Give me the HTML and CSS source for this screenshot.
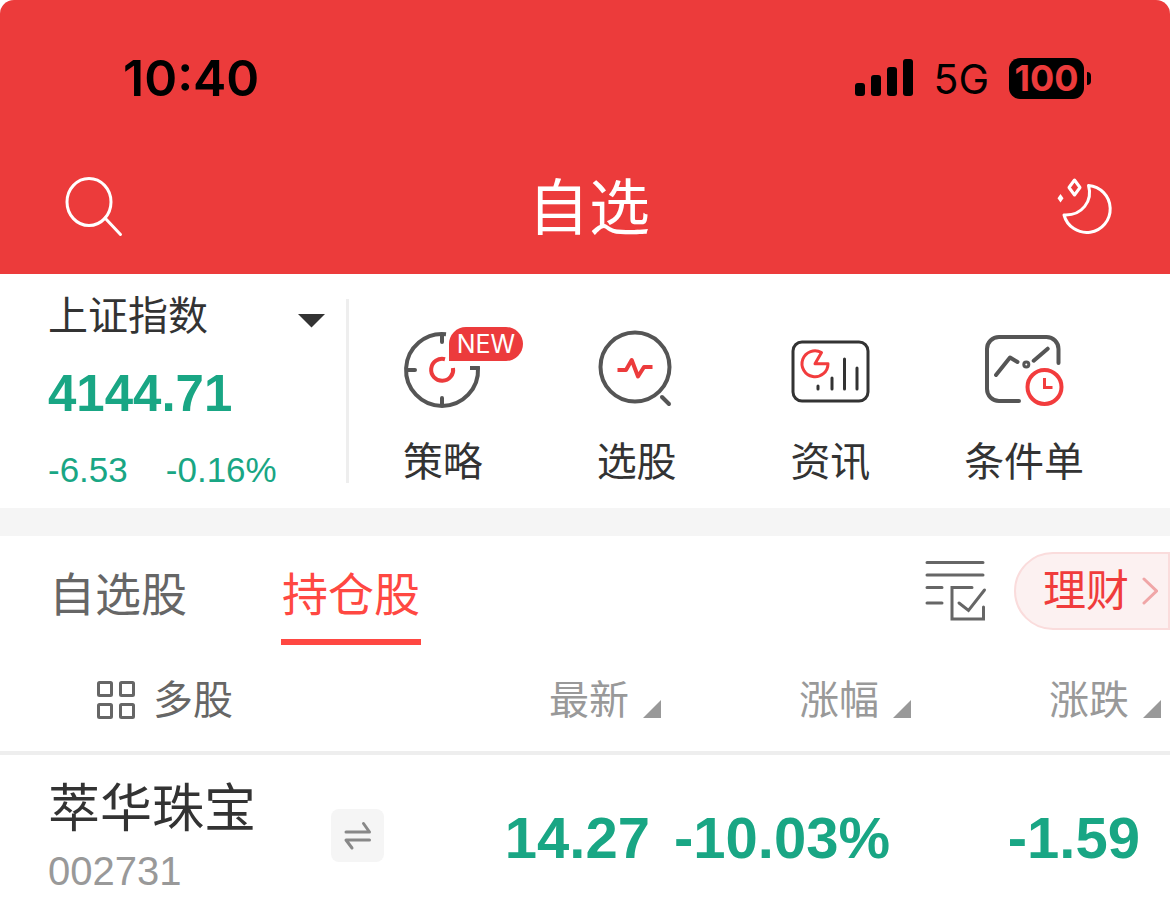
FILE: index.html
```html
<!DOCTYPE html>
<html lang="zh-CN">
<head>
<meta charset="utf-8">
<meta name="viewport" content="width=device-width, initial-scale=1">
<title>自选</title>
<link rel="stylesheet" href="styles.css">
</head>
<body>
<header class="header">
  <div class="status">
    <time class="clock">10:40</time>
    <div class="status-right">
      <svg class="signal" width="58" height="38" viewBox="0 0 58 38" aria-hidden="true">
        <rect x="0" y="24" width="10" height="13" rx="3"/><rect x="16" y="16" width="10" height="21" rx="3"/><rect x="32" y="8" width="10" height="29" rx="3"/><rect x="48" y="0" width="10" height="37" rx="3"/>
      </svg>
      <span class="network">5G</span>
      <span class="battery"><span class="battery-level">100</span><span class="battery-tip"></span></span>
    </div>
  </div>
  <div class="titlebar">
    <button class="icon-button" aria-label="搜索">
      <svg width="60" height="62" viewBox="0 0 60 62" fill="none" stroke="#fff" stroke-width="3" stroke-linecap="round"><ellipse cx="25" cy="26" rx="22" ry="23.5"/><path d="M41 42 56.5 58.5"/></svg>
    </button>
    <h1 class="title">自选</h1>
    <button class="icon-button" aria-label="夜间模式">
      <svg width="60" height="62" viewBox="0 0 60 62" fill="none" stroke="#fff" stroke-width="3" stroke-linejoin="round"><path d="M34.5 9.5A23.5 23.5 0 1 1 10 39C28 40 39 25 34.5 9.5Z"/><path d="M20.5 4 26 11.500 20.500 19 15 11.500Z"/><path d="M6.500 18 9.500 22.300 6.500 26.500 3.500 22.300Z" fill="#fff" stroke="none"/></svg>
    </button>
  </div>
</header>

<main>
  <section class="overview">
    <div class="index">
      <button class="index-name">上证指数
        <svg class="caret" width="28" height="14" viewBox="0 0 28 14" aria-hidden="true"><path d="M0 0H27L13.500 13.500Z" fill="#333"/></svg>
      </button>
      <strong class="index-value">4144.71</strong>
      <div class="index-change"><span>-6.53</span><span>-0.16%</span></div>
    </div>
    <nav class="tools">
      <a class="tool" href="#strategy">
        <span class="tool-icon">
          <svg width="80" height="80" viewBox="0 0 80 80" fill="none" stroke="#555" stroke-width="4"><path d="M43 4.200A36 36 0 1 0 75 38H67"/><path d="M39 5V12M5 40H12M39 75V68" stroke-linecap="round"/><path d="M42 29.200A11 11 0 1 0 50 38" stroke="#ec3b3c"/></svg>
          <span class="badge">NEW</span>
        </span>
        策略
      </a>
      <a class="tool" href="#screener">
        <span class="tool-icon">
          <svg width="80" height="80" viewBox="0 0 80 80" fill="none" stroke="#555" stroke-width="4"><circle cx="38" cy="37" r="34.500"/><path d="M65 67 72 74" stroke-linecap="round"/><path d="M20.500 40H29L34.700 30 41 46.500 47 37H55.500" stroke="#ec3b3c" stroke-linejoin="round"/></svg>
        </span>
        选股
      </a>
      <a class="tool" href="#news">
        <span class="tool-icon">
          <svg width="80" height="80" viewBox="0 0 80 80" fill="none" stroke="#333" stroke-width="3"><rect x="3" y="12" width="75" height="59" rx="9"/><path d="M28 56V59M42 48V59M54.500 29V59M67 38V59" stroke-linecap="round"/><path d="M25 33.700H38A13 13 0 1 1 31.500 22.500Z" stroke="#f23c3d" stroke-linejoin="round"/></svg>
        </span>
        资讯
      </a>
      <a class="tool" href="#orders">
        <span class="tool-icon">
          <svg width="80" height="80" viewBox="0 0 80 80" fill="none" stroke="#555" stroke-width="4" stroke-linecap="round" stroke-linejoin="round"><path d="M74.500 33V19A12 12 0 0 0 62.500 7H15A12 12 0 0 0 3 19V59A12 12 0 0 0 15 71H35"/><path d="M12 45 26 27.500 33.500 32M49.700 30.700 63.700 18.700"/><circle cx="42.300" cy="34.500" r="2.500" stroke-width="3"/><g stroke="#f23c3d" stroke-linecap="butt" stroke-linejoin="miter"><circle cx="60.500" cy="57" r="17"/><path d="M60.500 48V57.500H68.500" stroke-width="3"/></g></svg>
        </span>
        条件单
      </a>
    </nav>
  </section>

  <section class="watchlist">
    <div class="toolbar">
      <div class="tabs" role="tablist">
        <button class="tab" role="tab" aria-selected="false">自选股</button>
        <button class="tab tab-active" role="tab" aria-selected="true">持仓股</button>
      </div>
      <div class="toolbar-right">
        <button class="icon-button" aria-label="编辑列表">
          <svg width="64" height="64" viewBox="0 0 64 64" fill="none" stroke="#666" stroke-width="3" stroke-linecap="round"><path d="M3 3.500H59M3 16H59M3 28.500H18M3 44H18M48 28.500H28V60H59.500V48"/><path d="M35 44 44.500 51.500 60.500 31"/></svg>
        </button>
        <a class="wealth" href="#wealth">理财
          <svg width="16" height="28" viewBox="0 0 16 28" fill="none" stroke="#f0a6a7" stroke-width="3" stroke-linecap="round" aria-hidden="true"><path d="M2 2 14.500 14 2 26"/></svg>
        </a>
      </div>
    </div>

    <table class="stocks">
      <thead>
        <tr>
          <th class="col-name" scope="col"><button class="multi"><svg width="38" height="38" viewBox="0 0 38 38" fill="none" stroke="#666" stroke-width="3" aria-hidden="true"><rect x="1.500" y="1.500" width="13" height="13" rx="1"/><rect x="23.500" y="1.500" width="13" height="13" rx="1"/><rect x="1.500" y="23.500" width="13" height="13" rx="1"/><rect x="23.500" y="23.500" width="13" height="13" rx="1"/></svg>多股</button></th>
          <th class="col-value" scope="col"><button class="sort">最新</button></th>
          <th class="col-value" scope="col"><button class="sort">涨幅</button></th>
          <th class="col-value" scope="col"><button class="sort">涨跌</button></th>
        </tr>
      </thead>
      <tbody>
        <tr>
          <td>
            <div class="stock">
              <div class="stock-text"><span class="stock-name">萃华珠宝</span><span class="stock-code">002731</span></div>
              <button class="swap" aria-label="切换"><svg width="53" height="53" viewBox="0 0 53 53" fill="none" stroke="#888" stroke-width="3" stroke-linecap="round" stroke-linejoin="round"><path d="M15 23H38.500L32.500 14.500M38.500 31H15L21 39"/></svg></button>
            </div>
          </td>
          <td class="price">14.27</td>
          <td class="price price-wide">-10.03%</td>
          <td class="price price-wide">-1.59</td>
        </tr>
      </tbody>
    </table>
  </section>
</main>
</body>
</html>
```
FILE: styles.css
```css
* {
  box-sizing: border-box;
}

body {
  margin: 0;
  background: #fff;
  color: #333;
  font-family: "Liberation Sans", "Noto Sans CJK SC", sans-serif;
  font-size: 40px;
  line-height: 60px;
}

button {
  padding: 0;
  border: 0;
  background: none;
  color: inherit;
  font: inherit;
}

a {
  color: inherit;
  text-decoration: none;
}

svg {
  display: block;
  flex: none;
}

.header {
  padding-bottom: 22px;
  border-radius: 14px 14px 0 0;
  background: #ec3b3b;
}

.status {
  display: flex;
  align-items: center;
  justify-content: space-between;
  height: 156px;
  padding: 0 79px 0 123px;
  color: #000;
  font-family: Inter, sans-serif;
}

.clock {
  font-size: 50px;
  font-weight: 600;
}

.status-right {
  display: flex;
  align-items: center;
  gap: 20px;
}

.network {
  font-size: 41px;
  line-height: 60px;
  padding-top: 2px;
}

.battery {
  display: flex;
  align-items: center;
  gap: 3px;
}

.battery-level {
  width: 75px;
  border-radius: 11px;
  background: #000;
  color: #ec3b3b;
  font-size: 36px;
  font-weight: 700;
  line-height: 41px;
  text-align: center;
}

.battery-tip {
  width: 4px;
  height: 13px;
  border-radius: 0 4px 4px 0;
  background: #000;
}

.titlebar {
  display: flex;
  align-items: center;
  justify-content: space-between;
  height: 96px;
  padding: 6px 56px 0 64px;
}

.title {
  margin: 0;
  padding-top: 4px;
  color: #fff;
  font-size: 61px;
  font-weight: 400;
  line-height: 84px;
}

.overview {
  display: flex;
  border-bottom: 28px solid #f5f5f5;
  padding: 12px 49px 14px 0;
}

.index {
  display: flex;
  flex: none;
  flex-direction: column;
  align-items: flex-start;
  width: 346px;
  padding: 0 20px 0 48px;
}

.index-name {
  display: flex;
  align-items: center;
  justify-content: space-between;
  width: 100%;
}

.caret {
  margin-top: 10px;
}

.index-value {
  margin-top: 18px;
  color: #19a684;
  font-size: 51px;
  line-height: 60px;
}

.index-change {
  display: flex;
  gap: 38px;
  margin-top: 22px;
  color: #19a684;
  font-size: 35px;
  line-height: 48px;
}

.tools {
  display: grid;
  flex: 1;
  grid-template-columns: repeat(4, 1fr);
  margin: 13px 0 11px;
  box-shadow: inset 3px 0 #eee;
}

.tool {
  display: flex;
  flex-direction: column;
  align-items: center;
  gap: 20px;
  padding-top: 31px;
  line-height: 60px;
}

.tool-icon {
  position: relative;
  height: 80px;
  margin-bottom: 2px;
}

.tools {
  height: 184px;
}

.badge {
  position: absolute;
  top: -3px;
  left: 46px;
  width: 74px;
  border-radius: 17px 17px 17px 0;
  background: #ec3b3c;
  color: #fff;
  font-family: Inter, sans-serif;
  font-size: 25px;
  line-height: 34px;
  text-align: center;
}

.toolbar {
  display: flex;
  justify-content: space-between;
  height: 109px;
  padding-left: 48px;
}

.tabs {
  display: flex;
  gap: 93px;
}

.tab {
  width: 140px;
  border-bottom: 6px solid transparent;
  padding-top: 14px;
  color: #666;
  font-size: 46px;
  line-height: 60px;
}

.tab-active {
  border-color: #ff4842;
  color: #ff4842;
}

.toolbar-right {
  display: flex;
  align-items: center;
  gap: 26px;
}

.wealth {
  display: flex;
  align-items: center;
  gap: 13px;
  height: 78px;
  border: 2px solid #fadcdc;
  border-radius: 39px 0 0 39px;
  padding: 0 10px 0 27px;
  background: #fcf1f1;
  color: #f03c3c;
  font-size: 43px;
}

.stocks {
  width: 100%;
  border-collapse: collapse;
  table-layout: fixed;
}

.stocks th {
  height: 108px;
  border-bottom: 4px solid #eee;
  padding: 4px 0 0;
  font-weight: 400;
}

.stocks td {
  padding: 0;
}

.col-value {
  width: 250px;
  color: #999;
}

.multi {
  display: flex;
  align-items: center;
  gap: 18px;
  padding-left: 97px;
  color: #666;
}

.sort {
  display: flex;
  align-items: center;
  gap: 14px;
  margin-left: auto;
  padding-right: 9px;
}

.sort::after {
  width: 18px;
  height: 18px;
  margin-top: 18px;
  background: #999;
  clip-path: polygon(100% 0, 100% 100%, 0 100%);
  content: "";
}

.stock {
  display: flex;
  align-items: center;
  justify-content: space-between;
  padding: 18px 36px 8px 48px;
}

.stock-text {
  display: flex;
  flex-direction: column;
}

.stock-name {
  font-size: 52px;
  line-height: 72px;
}

.stock-code {
  color: #999;
  line-height: 52px;
}

.swap {
  border-radius: 8px;
  background: #f5f5f5;
}

.stocks .price {
  padding: 16px 20px 0 0;
  color: #19a684;
  font-size: 58px;
  font-weight: 700;
  text-align: right;
  white-space: nowrap;
}

.stocks .price-wide {
  padding-right: 30px;
}
```
